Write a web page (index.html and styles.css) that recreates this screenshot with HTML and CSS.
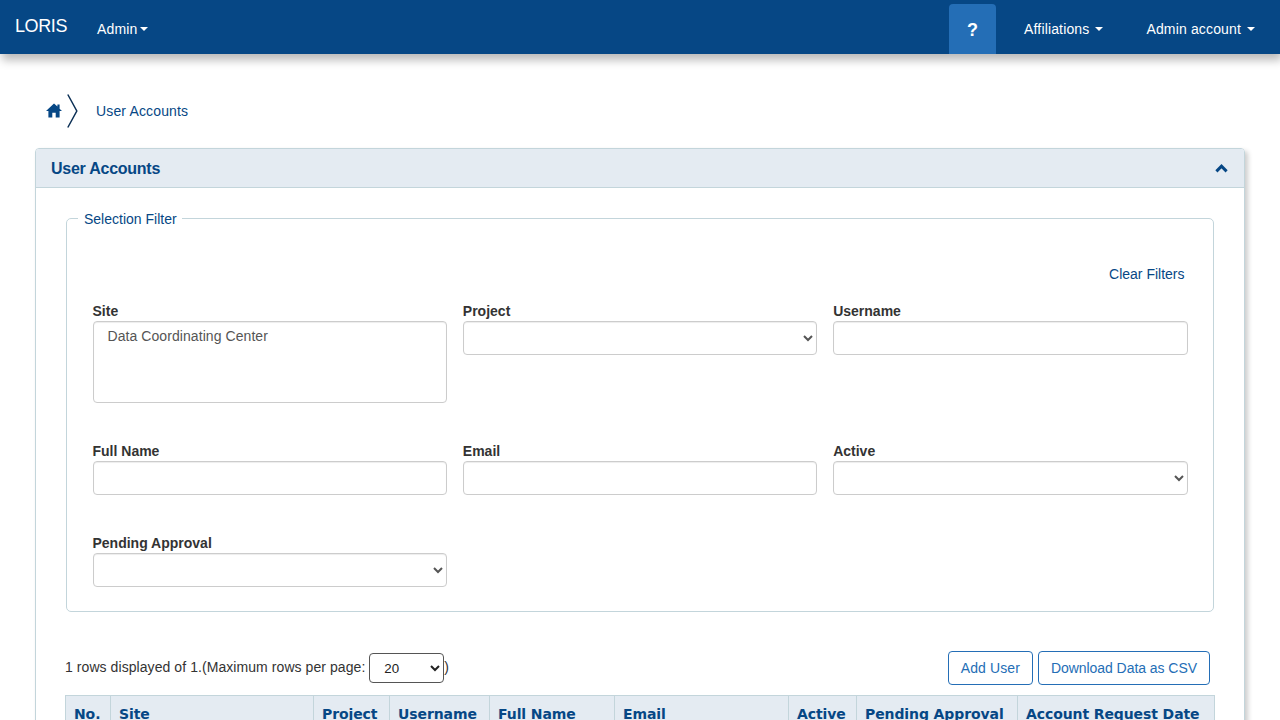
FILE: index.html
```html
<!DOCTYPE html>
<html lang="en">
<head>
    <meta charset="UTF-8">
    <meta name="viewport" content="width=device-width, initial-scale=1.0">
    <title>User Accounts</title>
    <link rel="stylesheet" href="styles.css">
</head>
<body>

    <nav class="navbar">
        <a class="brand">LORIS</a>
        <a class="nav-link nav-admin">Admin<span class="caret caret-tight"></span></a>
        <div class="nav-right">
            <a class="help-tab">?</a>
            <a class="nav-link nav-affiliations">Affiliations<span class="caret"></span></a>
            <a class="nav-link nav-account">Admin account<span class="caret"></span></a>
        </div>
    </nav>

    <div class="breadcrumb">
        <svg class="home-icon" viewBox="0 0 16 15" width="16" height="15">
            <path d="M8 0.5 L0 8 L2.4 8 L2.4 14.5 L6.3 14.5 L6.3 9.8 L9.7 9.8 L9.7 14.5 L13.6 14.5 L13.6 8 L16 8 L13.6 5.7 L13.6 1.5 L11.4 1.5 L11.4 3.6 Z" fill="#064785"/>
        </svg>
        <svg class="crumb-arrow" viewBox="0 0 11 34" width="11" height="34">
            <path d="M0.8 0.5 L9.8 17 L0.8 33.5" fill="none" stroke="#0b2f55" stroke-width="1.5"/>
        </svg>
        <a class="crumb-link">User Accounts</a>
    </div>

    <div class="panel">
        <div class="panel-heading">
            <span>User Accounts</span>
            <svg class="panel-toggle" viewBox="0 0 13 9" width="13" height="9">
                <path d="M1.4 7.4 L6.5 2.2 L11.6 7.4" fill="none" stroke="#064785" stroke-width="3"/>
            </svg>
        </div>
        <div class="panel-body">
            <fieldset class="filter">
                <legend>Selection Filter</legend>
                <div class="clear-row"><a class="clear-link">Clear Filters</a></div>
                <div class="filter-grid">
                    <div class="field field-site">
                        <label for="site">Site</label>
                        <select id="site" class="control control-list" multiple>
                            <option>Data Coordinating Center</option>
                        </select>
                    </div>
                    <div class="field field-site">
                        <label for="project">Project</label>
                        <select id="project" class="control"><option></option></select>
                    </div>
                    <div class="field field-site">
                        <label for="username">Username</label>
                        <input id="username" class="control" type="text">
                    </div>
                    <div class="field">
                        <label for="fullname">Full Name</label>
                        <input id="fullname" class="control" type="text">
                    </div>
                    <div class="field">
                        <label for="email">Email</label>
                        <input id="email" class="control" type="text">
                    </div>
                    <div class="field">
                        <label for="active">Active</label>
                        <select id="active" class="control"><option></option></select>
                    </div>
                    <div class="field">
                        <label for="pending">Pending Approval</label>
                        <select id="pending" class="control"><option></option></select>
                    </div>
                </div>
            </fieldset>

            <div class="table-tools">
                <div class="rows-info">1 rows displayed of 1.(Maximum rows per page:
                    <select class="rows-select"><option>20</option></select>)</div>
                <div class="tool-buttons">
                    <button class="btn btn-add">Add User</button>
                    <button class="btn btn-csv">Download Data as CSV</button>
                </div>
            </div>

            <table class="data-table">
                <thead>
                    <tr>
                        <th class="col-no">No.</th>
                        <th class="col-site">Site</th>
                        <th class="col-project">Project</th>
                        <th class="col-username">Username</th>
                        <th class="col-fullname">Full Name</th>
                        <th class="col-email">Email</th>
                        <th class="col-active">Active</th>
                        <th class="col-pending">Pending Approval</th>
                        <th class="col-date">Account Request Date</th>
                    </tr>
                </thead>
            </table>
        </div>
    </div>

</body>
</html>
```

FILE: styles.css
```css
html, body {
    height: 720px;
    overflow: hidden;
}
body {
    margin: 0;
    font-family: "Liberation Sans", Arial, sans-serif;
    font-size: 14px;
    line-height: 20px;
    color: #333;
    background-color: #fff;
}
.navbar {
    display: flex;
    align-items: center;
    height: 54px;
    background-color: #064785;
    color: #fff;
    box-shadow: 2px 6px 9px rgba(0, 0, 0, 0.28);
}
.brand {
    margin-left: 15px;
    margin-bottom: 3px;
    font-size: 18px;
    letter-spacing: -0.4px;
}
.nav-admin {
    margin-left: 30px;
    margin-top: 3px;
}
.nav-right {
    display: flex;
    align-items: center;
    margin-left: auto;
    height: 54px;
}
.nav-link {
    display: inline-flex;
    align-items: center;
    letter-spacing: 0.15px;
}
.caret {
    width: 0;
    height: 0;
    margin-left: 6px;
    border-top: 4px solid #fff;
    border-left: 4px solid transparent;
    border-right: 4px solid transparent;
}
.caret-tight {
    margin-left: 3px;
}
.help-tab {
    align-self: flex-end;
    width: 47px;
    height: 50px;
    line-height: 53px;
    text-align: center;
    font-size: 18px;
    font-weight: bold;
    background-color: #246eb6;
    border-radius: 4px 4px 0 0;
}
.nav-affiliations {
    margin-left: 28px;
    margin-top: 4px;
}
.nav-account {
    margin-left: 43px;
    margin-right: 25px;
    margin-top: 4px;
}
.breadcrumb {
    display: flex;
    align-items: center;
    height: 34px;
    margin-top: 40px;
    padding-left: 46px;
    color: #064785;
}
.home-icon {
    margin-bottom: 2px;
}
.crumb-arrow {
    margin-left: 5px;
}
.crumb-link {
    margin-left: 18px;
    letter-spacing: 0.15px;
}
.panel {
    margin: 20px 35px 0;
    border: 1px solid #c3d5db;
    border-radius: 4px;
    box-shadow: 3px 3px 5px rgba(0, 0, 0, 0.2);
}
.panel-heading {
    display: flex;
    align-items: center;
    justify-content: space-between;
    height: 38px;
    padding: 0 16px 0 15px;
    font-size: 16px;
    font-weight: bold;
    letter-spacing: -0.25px;
    color: #064785;
    background-color: #e4ebf2;
    border-bottom: 1px solid #c3d5db;
    border-radius: 3px 3px 0 0;
}
.panel-heading span {
    margin-top: 2px;
}
.panel-body {
    padding: 19px 29px 0;
}
.filter {
    margin: 0 1px;
    padding: 0 25.5px 24px;
    border: 1px solid #c3d5db;
    border-radius: 5px;
    height: 405px;
    box-sizing: border-box;
}
.filter legend {
    margin-left: -14.5px;
    padding: 2px 5px 0 6px;
    color: #064785;
}
.clear-row {
    margin-top: 35px;
    padding-right: 3px;
    text-align: right;
    color: #064785;
}
.filter-grid {
    display: grid;
    grid-template-columns: repeat(3, 1fr);
    column-gap: 16px;
    margin-top: 17px;
}
.field {
    height: 92px;
}
.field-site {
    height: 140px;
}
.field label {
    display: block;
    height: 20px;
    margin-bottom: 0;
    font-weight: bold;
}
.control {
    display: block;
    width: 100%;
    height: 34px;
    box-sizing: border-box;
    padding: 6px 12px;
    font-family: inherit;
    font-size: 14px;
    color: #555;
    background-color: #fff;
    border: 1px solid #ccc;
    border-radius: 4px;
    box-shadow: inset 0 1px 1px rgba(0, 0, 0, 0.075);
}
select.control {
    padding: 6px 4px;
}
select.control-list {
    height: 82px;
    padding: 6px 12px;
    letter-spacing: 0.07px;
    overflow: hidden;
}
.table-tools {
    display: flex;
    align-items: center;
    justify-content: space-between;
    margin-top: 39px;
    padding-right: 5px;
}
.rows-info {
    letter-spacing: 0.07px;
}
.rows-select {
    width: 75px;
    height: 30px;
    padding: 0 10px;
    font-family: inherit;
    font-size: 13.33px;
    color: #222;
    background-color: #fff;
    border: 1px solid #555;
    border-radius: 4px;
    vertical-align: middle;
}
.tool-buttons {
    display: flex;
    gap: 5px;
}
.btn {
    height: 34px;
    padding: 0 12px;
    font-family: inherit;
    font-size: 14px;
    color: #246eb6;
    background-color: #fff;
    border: 1px solid #246eb6;
    border-radius: 4px;
}
.btn-add {
    letter-spacing: 0.1px;
}
.btn-csv {
    letter-spacing: -0.05px;
}
.data-table {
    width: 1149px;
    margin-top: 10px;
    table-layout: fixed;
    border-collapse: collapse;
}
.data-table th {
    height: 36px;
    padding: 0 8px;
    box-sizing: border-box;
    text-align: left;
    font-family: "DejaVu Sans", Verdana, sans-serif;
    font-size: 14px;
    font-weight: bold;
    letter-spacing: -0.1px;
    white-space: nowrap;
    color: #064785;
    background-color: #e4ebf2;
    border: 1px solid #c3d5db;
}
.col-no { width: 45px; }
.col-site { width: 203px; }
.col-project { width: 76px; }
.col-username { width: 100px; }
.col-fullname { width: 125px; }
.col-email { width: 174px; }
.col-active { width: 68px; }
.col-pending { width: 161px; }
.col-date { width: 197px; }
```
